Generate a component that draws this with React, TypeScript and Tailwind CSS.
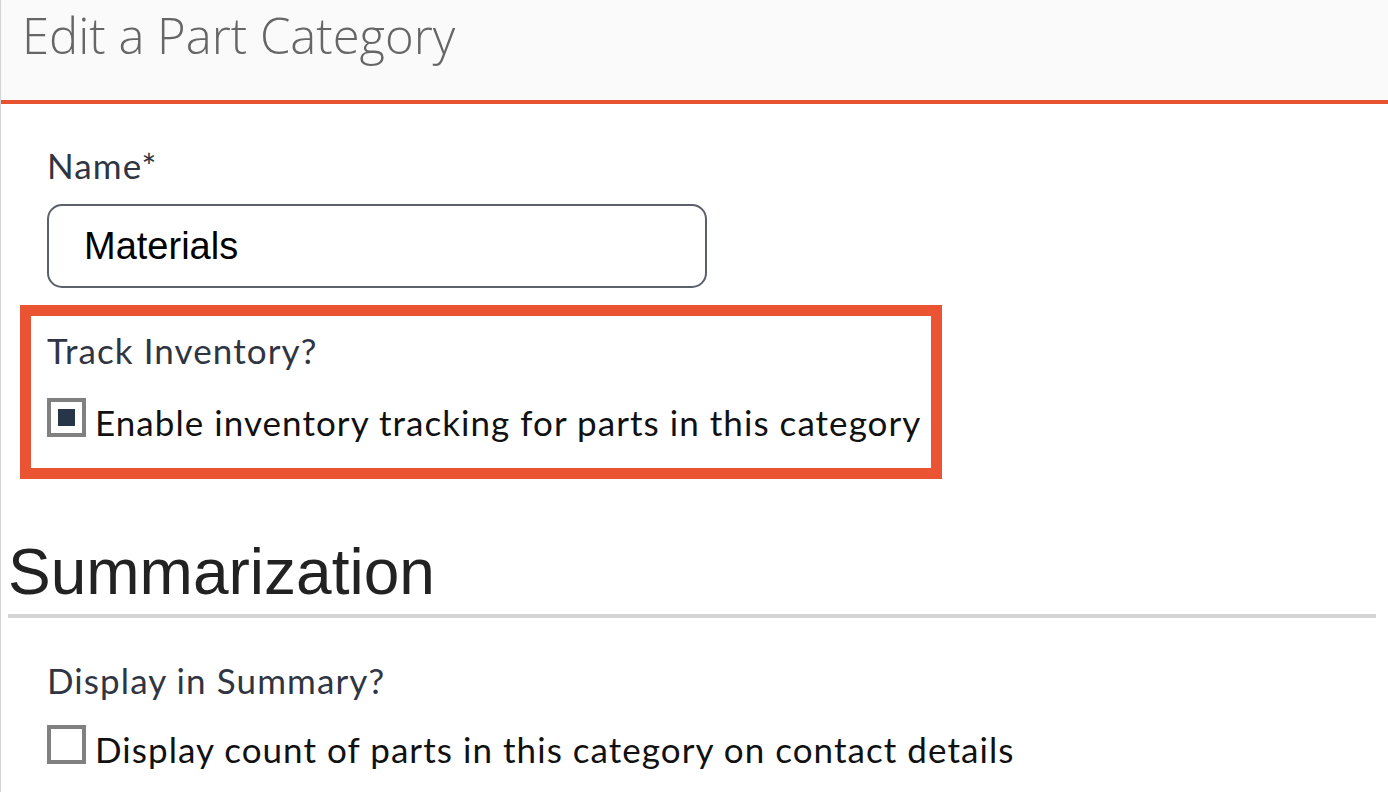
import React from 'react';

const labelFont = { fontFamily: 'Lato, "Noto Sans", sans-serif' };

interface CheckRowProps {
  checked: boolean;
  text: string;
}

const CheckRow = ({ checked, text }: CheckRowProps) => (
  <div className="flex items-end">
    <div className="w-[39px] h-[39px] mb-[3px] border-4 border-[#808080] bg-white flex items-center justify-center shrink-0">
      {checked && <div className="w-[17px] h-[17px] bg-[#263548]" />}
    </div>
    <span className="ml-[9px] text-[35px] leading-none tracking-[1.05px] text-[#111] whitespace-nowrap">{text}</span>
  </div>
);

const App = () => {
  return (
    <div
      className="w-[1388px] h-[792px] overflow-hidden bg-white border-l border-[#d4d4d4]"
      style={labelFont}
    >
      {/* Page header */}
      <header className="h-[104px] bg-[#fafafa] border-b-4 border-[#e8532f] pl-[21px] pt-[11px]">
        <h1
          className="text-[49px] leading-none font-light text-[#666666]"
          style={{ fontFamily: '"Open Sans", sans-serif' }}
        >
          Edit a Part Category
        </h1>
      </header>

      {/* Name field */}
      <div className="pl-[46px]">
        <label className="block mt-[44px] text-[35px] leading-none tracking-[1.1px] text-[#2f3542]">Name*</label>
        <div
          className="mt-[21px] w-[660px] h-[84px] border-2 border-[#5c606b] rounded-[15px] flex items-center px-[35px] text-[38px] text-black"
          style={{ fontFamily: '"Liberation Sans", Arial, sans-serif' }}
        >
          Materials
        </div>
      </div>

      {/* Highlighted track inventory option */}
      <div className="mt-[17px] ml-[19px] w-[922px] h-[174px] border-[11px] border-[#ea5433] pl-[16px]">
        <div className="mt-[17px] text-[35px] leading-none tracking-[1.1px] text-[#2f3542]">Track Inventory?</div>
        <div className="mt-[30px]">
          <CheckRow checked text="Enable inventory tracking for parts in this category" />
        </div>
      </div>

      {/* Summarization section */}
      <h2
        className="mt-[61px] ml-[7px] text-[64px] leading-none text-[#222222]"
        style={{ fontFamily: '"Liberation Sans", Arial, sans-serif' }}
      >
        Summarization
      </h2>
      <div className="mt-[10px] ml-[7px] mr-[12px] h-[4px] bg-[#d3d3d3]" />

      <div className="pl-[46px]">
        <div className="mt-[45px] text-[35px] leading-none tracking-[1.1px] text-[#2f3542]">Display in Summary?</div>
        <div className="mt-[27px]">
          <CheckRow checked={false} text="Display count of parts in this category on contact details" />
        </div>
      </div>
    </div>
  );
};

export default App;
